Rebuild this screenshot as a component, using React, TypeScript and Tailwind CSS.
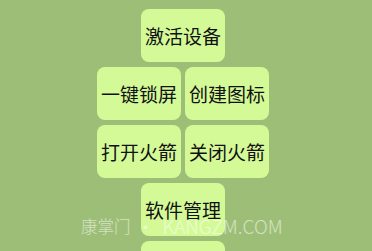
import React from 'react';

const rows: string[][] = [
  ['激活设备'],
  ['一键锁屏', '创建图标'],
  ['打开火箭', '关闭火箭'],
  ['软件管理'],
  ['更多功能'],
];

const font = { fontFamily: '"Noto Sans CJK SC", "DejaVu Sans", sans-serif' };

export default function App() {
  return (
    <div className="relative w-[372px] h-[251px] overflow-hidden bg-[#9dbe76]" style={font}>
      <div className="flex flex-col items-center gap-[5px] pt-[9px] pr-[6px]">
        {rows.map((row, i) => (
          <div key={i} className="flex gap-[4px]">
            {row.map((label) => (
              <button
                key={label}
                className="w-[84px] h-[53px] rounded-[8px] bg-[#d4fa98] text-[19px] leading-none text-[#111] flex items-center justify-center"
              >
                {label}
              </button>
            ))}
          </div>
        ))}
      </div>

      {/* watermark */}
      <div className="absolute left-[81px] top-[215px] flex items-center text-white/55 whitespace-nowrap pointer-events-none font-light">
        <span className="text-[16.5px] leading-[22px]">康掌门</span>
        <span className="text-[18px] leading-[22px] ml-[6px]">•</span>
        <span className="text-[19px] leading-[22px] ml-[8px]">KANGZM.COM</span>
      </div>
    </div>
  );
}
